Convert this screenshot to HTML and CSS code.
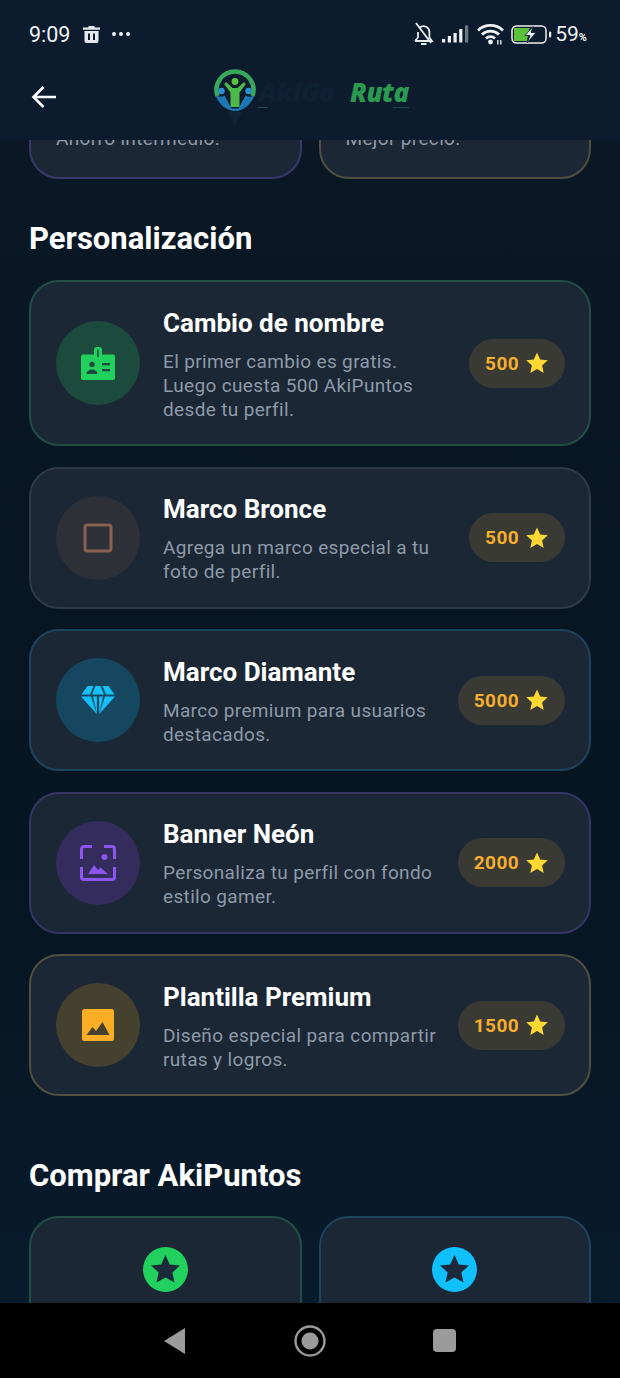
FILE: index.html
```html
<!DOCTYPE html>
<html lang="es">
<head>
    <meta charset="UTF-8">
    <title>AkiPuntos</title>
    <link rel="stylesheet" href="styles.css">
</head>
<body>

<div class="phone">
    <header class="top">
        <div class="status">
            <div class="status-left">
                <span class="time">9:09</span>
                <svg class="ic-trash" viewBox="0 0 17 17"><path d="M5.5 0h6v1.500H17v2.300H0V1.500h5.500zM1.500 5h14v10a2 2 0 0 1-2 2h-10a2 2 0 0 1-2-2z" fill="#e6eaee"/><path d="M6 7.500v6.500M11 7.500v6.500" stroke="#0c1c2e" stroke-width="2"/></svg>
                <span class="dots"><i></i><i></i><i></i></span>
            </div>
            <div class="status-right">
                <svg class="ic-bell" viewBox="0 0 22 24"><path d="M2 19h17l-2.600-3.500V10a5.800 5.800 0 0 0-9.500-4.500M5 10v5.500L2 19M8 22h5.500" fill="none" stroke="#e8ecef" stroke-width="1.800"/><path d="M3 1l15 20" stroke="#e8ecef" stroke-width="1.800"/></svg>
                <svg class="ic-signal" viewBox="0 0 27 18"><path d="M0 14h3.200v3.500H0zM5.800 11h3.200v6.500H5.800zM11.500 8h3.200v9.500h-3.200zM17.200 4h3.200v13.500h-3.200z" fill="#eef1f4"/><path d="M23 .5h3.200v17H23z" fill="#6d7885"/></svg>
                <svg class="ic-wifi" viewBox="0 0 27 22"><path d="M1 7.500a18 18 0 0 1 25 0M5 11.500a12.500 12.500 0 0 1 17 0M9 15.500a6.500 6.500 0 0 1 9 0" fill="none" stroke="#eef1f4" stroke-width="2.800"/><circle cx="13.500" cy="19" r="2.400" fill="#eef1f4"/><path d="M20 17h1.600v4.500H20zM23 17h1.600v4.500H23z" fill="#c9ced4"/></svg>
                <svg class="ic-battery" viewBox="0 0 41 19"><rect x="1" y="1" width="34" height="17" rx="4.500" fill="none" stroke="#eef1f4" stroke-width="1.500"/><path d="M3 3h15.500L16 16H3z" fill="#5cc13c"/><path d="M22 1.500l-8 9h5l-2.500 7 8.500-10h-5z" fill="#eef1f4" stroke="#0c1c2e" stroke-width=".8"/><rect x="38" y="6.500" width="2.200" height="6" rx="1" fill="#eef1f4"/></svg>
                <span class="batt">59<small>%</small></span>
            </div>
        </div>
        <div class="appbar">
            <svg class="ic-back" viewBox="0 0 26 24"><path d="M25 12H3M12.500 2L2.500 12l10 10" fill="none" stroke="#fff" stroke-width="2.600"/></svg>
            <div class="logo">
                <svg class="logo-mark" viewBox="0 0 42 58">
                    <path d="M3.500 27A18.500 18.500 0 1 1 38.500 27" fill="none" stroke="#38a85a" stroke-width="4.500"/>
                    <path d="M1.500 26c3 9 11 16 19.500 16s16.500-7 19.500-16c-3 2-6 2.500-9 .5l-7 13h-7l-7-13c-3 2-6 1.500-9-.5z" fill="#1d78b8"/>
                    <circle cx="21" cy="12.500" r="3.400" fill="#5cc13c"/>
                    <path d="M12 13l6.500 6h5l6.500-6 1.800 2.200-6.300 8.300V38h-9V23.500l-6.300-8.300z" fill="#4db84a"/>
                    <circle cx="7.500" cy="22" r="3.200" fill="#2d8fd0"/>
                    <circle cx="34.500" cy="22" r="3.200" fill="#2d8fd0"/>
                    <path d="M21 57l-7-14h14z" fill="#0e2438"/>
                </svg>
                <span class="logo-dark">AkiGo</span><span class="logo-green">Ruta</span>
                <span class="logo-rule"></span>
            </div>
        </div>
    </header>

    <main class="scroll">
        <div class="grid grid-top">
            <div class="box box-purple"><p>Ahorro intermedio.</p></div>
            <div class="box box-gold"><p>Mejor precio.</p></div>
        </div>

        <h2>Personalización</h2>

        <div class="list">
            <article class="card card-green">
                <div class="circle circle-green">
                    <svg viewBox="0 0 36 36" width="36" height="36"><path d="M3 9.500h11V5a3 3 0 0 1 3-3h2a3 3 0 0 1 3 3v4.500h11a2 2 0 0 1 2 2V33a2 2 0 0 1-2 2H3a2 2 0 0 1-2-2V11.500a2 2 0 0 1 2-2z" fill="#22d05e"/><path d="M17.200 4.500h1.600V12h-1.600z" fill="#1c4a3c"/><circle cx="12" cy="19.500" r="2.700" fill="#1c4a3c"/><path d="M6.500 29c0-3 3-4.500 5.500-4.500s5.500 1.500 5.500 4.500zM22 18h8v2.200h-8zM22 24h8v2.200h-8z" fill="#1c4a3c"/></svg>
                </div>
                <div class="info">
                    <h3>Cambio de nombre</h3>
                    <p>El primer cambio es gratis.<br>Luego cuesta 500 AkiPuntos<br>desde tu perfil.</p>
                </div>
                <div class="price"><span>500</span><svg viewBox="0 0 24 24"><path class="star" d="M12 1.500l3.200 7 7.600.8-5.700 5.100 1.600 7.500L12 18.100l-6.700 3.800 1.600-7.500L1.200 9.300l7.600-.8z"/></svg></div>
            </article>

            <article class="card card-grey">
                <div class="circle circle-brown">
                    <svg viewBox="0 0 30 30" width="30" height="30"><rect x="2" y="2" width="26" height="26" rx="2.500" fill="none" stroke="#8a6150" stroke-width="3"/></svg>
                </div>
                <div class="info">
                    <h3>Marco Bronce</h3>
                    <p>Agrega un marco especial a tu<br>foto de perfil.</p>
                </div>
                <div class="price"><span>500</span><svg viewBox="0 0 24 24"><path class="star" d="M12 1.500l3.200 7 7.600.8-5.700 5.100 1.600 7.500L12 18.100l-6.700 3.800 1.600-7.500L1.200 9.300l7.600-.8z"/></svg></div>
            </article>

            <article class="card card-blue">
                <div class="circle circle-blue">
                    <svg viewBox="0 0 36 30" width="36" height="30"><path d="M7.500 1h6L10 9.500H1.500zM15.500 1h5l3.500 8.500H12zM22.500 1h6l6 8.500H26zM1 11.500h10l5.800 17.500zM13 11.500h3.900V29zM19.100 11.500H23L19.100 29zM25 11.500h10L19.200 29z" fill="#14c1fb"/></svg>
                </div>
                <div class="info">
                    <h3>Marco Diamante</h3>
                    <p>Marco premium para usuarios<br>destacados.</p>
                </div>
                <div class="price"><span>5000</span><svg viewBox="0 0 24 24"><path class="star" d="M12 1.500l3.200 7 7.600.8-5.700 5.100 1.600 7.500L12 18.100l-6.700 3.800 1.600-7.500L1.200 9.300l7.600-.8z"/></svg></div>
            </article>

            <article class="card card-purple">
                <div class="circle circle-purple">
                    <svg viewBox="0 0 36 36" width="36" height="36"><path d="M1.500 14V4a2.500 2.500 0 0 1 2.500-2.500h8M24 1.500h8A2.500 2.500 0 0 1 34.500 4v10M34.500 22v10a2.500 2.500 0 0 1-2.500 2.500H4A2.500 2.500 0 0 1 1.500 32V22" fill="none" stroke="#8b56ee" stroke-width="3"/><circle cx="24.500" cy="12" r="3" fill="#8b56ee"/><path d="M8 29l6-9 4 5 2.500-2.500L28 29z" fill="#8b56ee"/></svg>
                </div>
                <div class="info">
                    <h3>Banner Neón</h3>
                    <p>Personaliza tu perfil con fondo<br>estilo gamer.</p>
                </div>
                <div class="price"><span>2000</span><svg viewBox="0 0 24 24"><path class="star" d="M12 1.500l3.200 7 7.600.8-5.700 5.100 1.600 7.500L12 18.100l-6.700 3.800 1.600-7.500L1.200 9.300l7.600-.8z"/></svg></div>
            </article>

            <article class="card card-gold">
                <div class="circle circle-gold">
                    <svg viewBox="0 0 32 32" width="32" height="32"><rect width="32" height="32" rx="2.500" fill="#fbae25"/><path d="M4.500 26l6-8 3.500 4 6.500-9 7 13z" fill="#44412f"/></svg>
                </div>
                <div class="info">
                    <h3>Plantilla Premium</h3>
                    <p>Diseño especial para compartir<br>rutas y logros.</p>
                </div>
                <div class="price"><span>1500</span><svg viewBox="0 0 24 24"><path class="star" d="M12 1.500l3.200 7 7.600.8-5.700 5.100 1.600 7.500L12 18.100l-6.700 3.800 1.600-7.500L1.200 9.300l7.600-.8z"/></svg></div>
            </article>
        </div>

        <h2 class="h2-buy">Comprar AkiPuntos</h2>

        <div class="grid">
            <div class="box box-buy-green">
                <svg class="coin" viewBox="0 0 45 45"><circle cx="22.500" cy="22.500" r="22.500" fill="#22d05e"/><path d="M22.500 8l4.300 9.400 10.200 1.100-7.600 6.900 2.100 10.100-9-5.100-9 5.100 2.100-10.100L8 18.500l10.200-1.100z" fill="#1b2a3a"/></svg>
            </div>
            <div class="box box-buy-blue">
                <svg class="coin" viewBox="0 0 45 45"><circle cx="22.500" cy="22.500" r="22.500" fill="#10c0fd"/><path d="M22.500 8l4.300 9.400 10.200 1.100-7.600 6.900 2.100 10.100-9-5.100-9 5.100 2.100-10.100L8 18.500l10.200-1.100z" fill="#1b2a3a"/></svg>
            </div>
        </div>
    </main>

    <nav class="navbar">
        <svg width="24" height="28" viewBox="0 0 24 28"><path d="M22 1v26L1 14z" fill="#9b9b9b"/></svg>
        <svg width="32" height="32" viewBox="0 0 32 32"><circle cx="16" cy="16" r="14.500" fill="none" stroke="#9b9b9b" stroke-width="2.400"/><circle cx="16" cy="16" r="8.500" fill="#9b9b9b"/></svg>
        <svg width="23" height="23" viewBox="0 0 23 23"><rect width="23" height="23" rx="4" fill="#9b9b9b"/></svg>
    </nav>
</div>

</body>
</html>
```

FILE: styles.css
```css
* {
    box-sizing: border-box;
}
html, body {
    margin: 0;
    padding: 0;
}
body {
    font-family: Roboto, 'Liberation Sans', sans-serif;
    background-color: #000;
}
.phone {
    width: 620px;
    height: 1378px;
    display: flex;
    flex-direction: column;
    overflow: hidden;
}

/* cabecera */
.top {
    height: 140px;
    flex: none;
    background-color: #0c1c2e;
    padding: 0 30px;
}
.status {
    height: 54px;
    padding-top: 14px;
    display: flex;
    justify-content: space-between;
    align-items: center;
}
.status-left, .status-right {
    display: flex;
    align-items: center;
}
.time {
    color: #eef1f4;
    font-size: 21.5px;
    margin-left: -1px;
}
.ic-trash {
    width: 17px;
    height: 17px;
    margin-left: 13px;
}
.dots {
    display: flex;
    gap: 3px;
    margin-left: 12px;
}
.dots i {
    width: 4px;
    height: 4px;
    border-radius: 50%;
    background-color: #eef1f4;
}
.status-right {
    margin-right: 3px;
}
.ic-bell {
    width: 22px;
    height: 24px;
    margin-right: 1px;
}
.ic-signal {
    width: 27px;
    height: 18px;
    margin-left: 6px;
}
.ic-wifi {
    width: 27px;
    height: 22px;
    margin-left: 8px;
}
.ic-battery {
    width: 41px;
    height: 19px;
    margin-left: 7px;
}
.batt {
    color: #eef1f4;
    font-size: 21px;
    margin-left: 3px;
}
.batt small {
    font-size: 11px;
    font-weight: 700;
}
.appbar {
    display: flex;
    align-items: center;
    height: 86px;
}
.ic-back {
    width: 26px;
    height: 24px;
    margin-left: 1px;
    flex: none;
}
.logo {
    position: relative;
    display: flex;
    align-items: center;
    margin-left: 157px;
    margin-bottom: 11px;
}
.logo-mark {
    width: 42px;
    height: 58px;
    margin-top: 12px;
}
.logo-dark, .logo-green {
    font-family: 'Open Sans', sans-serif;
    font-style: italic;
    font-weight: 800;
    font-size: 26px;
}
.logo-dark {
    color: #0e2134;
    margin-left: 3px;
    width: 91px;
}
.logo-green {
    color: #2a9a50;
    letter-spacing: -.5px;
}
.logo-rule {
    position: absolute;
    left: 44px;
    right: 0;
    top: 50px;
    height: 1px;
    background: linear-gradient(90deg, #1f4a50 0 10px, transparent 10px 135px, #1f4a50 135px);
}

/* contenido */
.scroll {
    flex: 1;
    min-height: 0;
    overflow: hidden;
    padding: 0 29px;
    background: linear-gradient(180deg, #0a1826 0%, #061522 60%, #081b2c 100%);
}
.grid {
    display: grid;
    grid-template-columns: 1fr 1fr;
    gap: 17px;
}
.grid-top {
    margin-top: -61px;
}
.box {
    height: 100px;
    border-radius: 30px;
    background-color: #1b2735;
    border: 2px solid #3c4a5c;
    padding: 46px 25px 0;
}
.box p {
    margin: 0;
    color: #8d9aa8;
    font-size: 19px;
    line-height: 24px;
    letter-spacing: .35px;
}
.box-purple { border-color: #38386c; }
.box-gold { border-color: #524f40; }
.box-buy-green {
    border-color: #214f46;
    height: 200px;
    padding-top: 29px;
    text-align: center;
}
.box-buy-blue {
    border-color: #1c445e;
    height: 200px;
    padding-top: 29px;
    text-align: center;
}
.coin {
    width: 45px;
    height: 45px;
    display: block;
    margin: 0 auto;
}
h2 {
    margin: 41px 0 22px;
    color: #fff;
    font-size: 31px;
    line-height: 38px;
    font-weight: 700;
}
.h2-buy {
    margin-top: 61px;
    margin-bottom: 21px;
}
.list {
    display: flex;
    flex-direction: column;
    gap: 20.5px;
}
.card {
    display: flex;
    align-items: center;
    min-height: 142px;
    padding: 0 24px 0 25px;
    border-radius: 30px;
    background-color: #1b2735;
    border: 2px solid #3c4a5c;
}
.card-green { height: 166px; border-color: #214f46; }
.card-grey { border-color: #2e3a48; }
.card-blue { border-color: #1c445e; }
.card-purple { border-color: #353566; }
.card-gold { border-color: #524f40; }
.circle {
    width: 84px;
    height: 84px;
    border-radius: 50%;
    flex: none;
    display: flex;
    align-items: center;
    justify-content: center;
}
.circle-green { background-color: #1c4a3c; }
.circle-brown { background-color: #2e3038; }
.circle-blue { background-color: #154860; }
.circle-purple { background-color: #332c5c; }
.circle-gold { background-color: #44412f; }
.info {
    flex: 1;
    margin-left: 23px;
    padding-top: 2px;
    min-width: 0;
}
.info h3 {
    margin: 0 0 11px;
    color: #fff;
    font-size: 26px;
    line-height: 32px;
    font-weight: 700;
    white-space: nowrap;
}
.info p {
    margin: 0;
    color: #8d9aa8;
    font-size: 19px;
    line-height: 24px;
    letter-spacing: .35px;
    white-space: nowrap;
}
.price {
    flex: none;
    height: 49px;
    padding: 0 16px;
    border-radius: 25px;
    background-color: #3a3a35;
    display: flex;
    align-items: center;
    gap: 6px;
}
.price span {
    color: #f6ae2d;
    font-size: 19px;
    font-weight: 700;
    letter-spacing: .4px;
}
.price svg {
    width: 24px;
    height: 24px;
}
.star {
    fill: #fdd835;
}

/* barra de navegacion */
.navbar {
    height: 75px;
    flex: none;
    background-color: #000;
    display: flex;
    align-items: center;
    padding-left: 163px;
    gap: 107px;
}
```
